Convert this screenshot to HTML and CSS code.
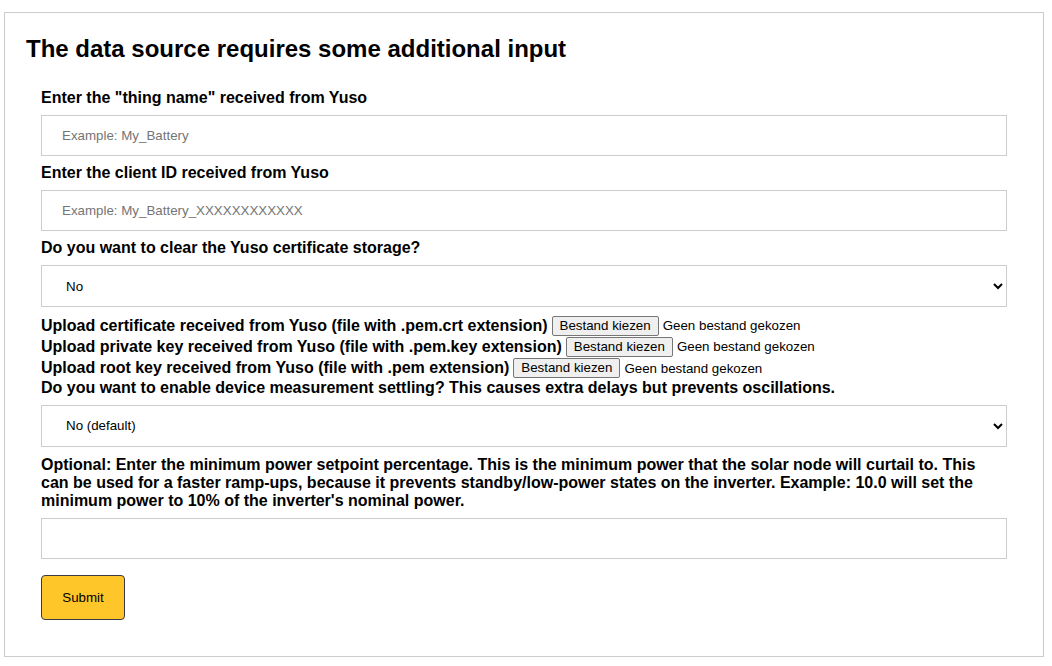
FILE: index.html
```html
<!DOCTYPE html>
<html>
	<head>
		<meta charset="UTF-8">
		<title>Data source input</title>
		<link rel="stylesheet" href="styles.css">
	</head>
	<body>
		<div class="panel">
			<h2 class="title">The data source requires some additional input</h2>
			<form class="form" action="javascript:;">
				<label class="field-label" for="thing">Enter the "thing name" received from Yuso</label>
				<input class="field" type="text" id="thing" placeholder="Example: My_Battery">

				<label class="field-label" for="client">Enter the client ID received from Yuso</label>
				<input class="field" type="text" id="client" placeholder="Example: My_Battery_XXXXXXXXXXXX">

				<label class="field-label" for="clear">Do you want to clear the Yuso certificate storage?</label>
				<select class="field select" id="clear">
					<option>No</option>
					<option>Yes</option>
				</select>

				<div class="upload">
					<label class="upload-label" for="cert">Upload certificate received from Yuso (file with .pem.crt extension)</label>
					<span class="file"><input type="file" id="cert" class="file-input"><span class="file-btn">Bestand kiezen</span><span class="file-name">Geen bestand gekozen</span></span>
				</div>
				<div class="upload">
					<label class="upload-label" for="key">Upload private key received from Yuso (file with .pem.key extension)</label>
					<span class="file"><input type="file" id="key" class="file-input"><span class="file-btn">Bestand kiezen</span><span class="file-name">Geen bestand gekozen</span></span>
				</div>
				<div class="upload">
					<label class="upload-label" for="root">Upload root key received from Yuso (file with .pem extension)</label>
					<span class="file"><input type="file" id="root" class="file-input"><span class="file-btn">Bestand kiezen</span><span class="file-name">Geen bestand gekozen</span></span>
				</div>

				<label class="field-label" for="settle">Do you want to enable device measurement settling? This causes extra delays but prevents oscillations.</label>
				<select class="field select" id="settle">
					<option>No (default)</option>
					<option>Yes</option>
				</select>

				<label class="field-label note" for="minpower">Optional: Enter the minimum power setpoint percentage. This is the minimum power that the solar node will curtail to. This can be used for a faster ramp-ups, because it prevents standby/low-power states on the inverter. Example: 10.0 will set the minimum power to 10% of the inverter's nominal power.</label>
				<input class="field" type="text" id="minpower">

				<button class="submit" type="submit">Submit</button>
			</form>
		</div>
	</body>
</html>
```

FILE: styles.css
```css
* {
	box-sizing: border-box;
}
body {
	margin: 0;
	padding: 12px 8px 9px 4px;
	font-family: "Liberation Sans", Arial, sans-serif;
	color: #000;
	background: #fff;
}
.panel {
	border: 1px solid #ccc;
	padding: 22px 21px 21px 21px;
}
.title {
	margin: 0 0 26px 0;
	font-size: 24px;
	font-weight: bold;
}
.form {
	margin: 0 15px;
	padding-bottom: 15px;
}
.field-label {
	display: block;
	font-size: 16px;
	font-weight: bold;
	margin-bottom: 8px;
}
.note {
	padding-top: 1px;
}
.field {
	display: block;
	width: 100%;
	margin: 0 0 8px 0;
	padding: 12px 20px;
	border: 1px solid #ccc;
	border-radius: 0;
	background: #fff;
	font-family: "Liberation Sans", Arial, sans-serif;
	font-size: 13.333px;
	color: #000;
}
.field::placeholder {
	color: #757575;
}
.select {
	height: 42px;
	padding: 0 14px 0 20px;
}
.upload {
	display: flex;
	align-items: center;
	height: 21.33px;
}
.upload-label {
	font-size: 16px;
	font-weight: bold;
	margin-right: 4px;
}
.file {
	display: inline-flex;
	align-items: center;
	font-size: 13.333px;
}
.file-input {
	display: none;
}
.file-btn {
	padding: 1px 7px;
	border: 1px solid #767676;
	border-radius: 2px;
	background: #efefef;
	line-height: 16px;
	margin-right: 4px;
}
.file-name {
	color: #000;
}
.submit {
	width: 84px;
	margin-top: 8px;
	padding: 14px 0;
	border: 1px solid #3b3a48;
	border-radius: 4px;
	background: #ffc629;
	font-family: "Liberation Sans", Arial, sans-serif;
	font-size: 13.333px;
	color: #000;
}
```
